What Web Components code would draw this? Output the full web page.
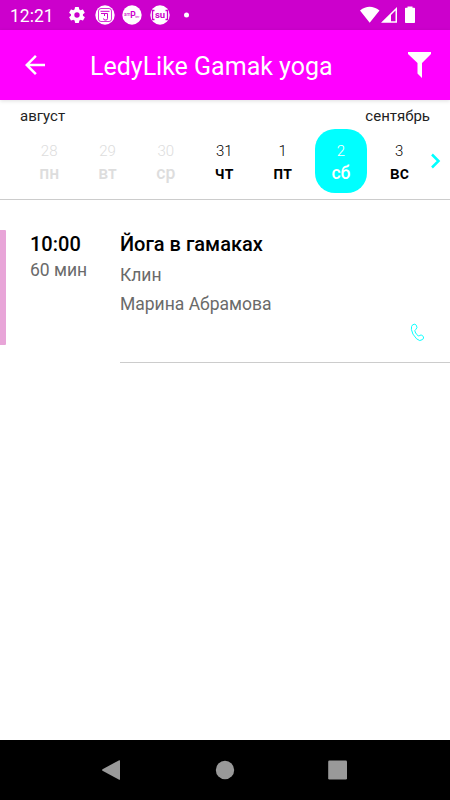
<!DOCTYPE html>
<html lang="ru">
<head>
<meta charset="utf-8">
<title>LedyLike Gamak yoga</title>
<style>
html,body{margin:0;height:100%}
body{font-family:Roboto,"Noto Sans",sans-serif;background:#fff;color:#000;overflow:hidden}
</style>
</head>
<body>
<schedule-app></schedule-app>
<script>
function define(name, html) {
  const t = document.createElement('template');
  t.innerHTML = html;
  customElements.define(name, class extends HTMLElement {
    constructor() {
      super();
      this.attachShadow({mode: 'open'}).append(t.content.cloneNode(true));
    }
  });
}

define('status-bar', `
<style>
:host{display:flex;align-items:center;height:30px;background:#c0c;color:#fff;box-sizing:border-box;padding:0 34px 0 10px}
.clock{font-size:17.5px;line-height:30px;width:57px;margin-top:1px}
svg{display:block;flex:none}
.ic{margin-right:7.500px}
.right{margin-left:auto;display:flex;align-items:center}
</style>
<span class="clock">12:21</span>
<svg class="ic" width="20" height="20" viewBox="0 0 24 24" fill="#fff"><path d="M19.1 12.9a7 7 0 0 0 0-1.8l2-1.6a.5.5 0 0 0 .1-.6l-1.900-3.300a.5.5 0 0 0-.6-.2l-2.400 1a7 7 0 0 0-1.600-1l-.4-2.500a.5.5 0 0 0-.5-.4h-3.800a.5.5 0 0 0-.5.4l-.4 2.500a7 7 0 0 0-1.600 1l-2.400-1a.5.5 0 0 0-.6.2L2.700 8.900a.5.5 0 0 0 .1.600l2 1.600a7 7 0 0 0 0 1.800l-2 1.600a.5.5 0 0 0-.1.600l1.900 3.300c.1.200.4.300.6.200l2.400-1a7 7 0 0 0 1.600 1l.4 2.500c0 .200.200.400.500.400h3.800c.300 0 .500-.200.500-.400l.400-2.500a7 7 0 0 0 1.600-1l2.400 1c.200.100.500 0 .600-.200l1.900-3.300a.5.5 0 0 0-.1-.600zM12 15.200a3.200 3.200 0 1 1 0-6.400 3.200 3.200 0 0 1 0 6.400z"/></svg>
<svg class="ic" width="20" height="20" viewBox="0 0 20 20"><circle cx="10" cy="10" r="9.700" fill="#fff"/><g fill="none" stroke="#c0c"><rect x="3.500" y="3.500" width="13" height="13" rx="2.500" stroke-width=".8"/><path d="M5.500 6.300h9M6 8.500h6.500v5q0 1.500-1.500 1.500h-1q-1.500 0-1.500-1.500M9.500 8.500v2.500" stroke-width="1"/></g></svg>
<svg class="ic" width="20" height="20" viewBox="0 0 20 20"><circle cx="10" cy="10" r="9.700" fill="#fff"/><g fill="#c0c" font-family="Roboto"><text x="2" y="11" font-size="4.500">am</text><text x="8.300" y="13" font-size="8.500" font-weight="700">P</text><text x="13.200" y="12.500" font-size="3.500">ter</text></g></svg>
<svg class="ic" width="20" height="20" viewBox="0 0 20 20"><circle cx="10" cy="10" r="9.700" fill="#fff"/><path d="M4.500 5.500H2.500v9h2M15.500 5.500h2v9h-2" fill="none" stroke="#c0c" stroke-width="1.300"/><text x="10" y="12.700" text-anchor="middle" font-family="Roboto" font-size="9.500" font-weight="700" fill="#c0c">su</text></svg>
<svg width="20" height="20" viewBox="0 0 20 20"><circle cx="9.500" cy="10" r="2.500" fill="#fff"/></svg>
<div class="right">
<svg width="56" height="20" viewBox="360 5 56 20" fill="#fff"><path d="M360 10.500Q369.500 3 379.500 10.500L369.700 22.700zM397 7v15.700h-16zM405 8.500q0-.8.800-.8h1.700V6.500h5v1.200h1.700q.8 0 .8.800v13.700q0 .8-.8.800h-8.400q-.8 0-.8-.8z"/><path d="M391 15l4.500-4.500v10.700H391z" fill="#c0c"/></svg>
</div>`);

define('app-bar', `
<style>
:host{display:flex;align-items:center;height:70px;background:#f0f;color:#fff;box-sizing:border-box;padding:0 18px 0 20px;position:relative;z-index:1;box-shadow:0 1px 4px rgba(0,0,0,.13)}
svg{display:block;flex:none}
h1{margin:4px 0 0 40px;font-size:25px;font-weight:400;line-height:30px;white-space:nowrap;flex:1}
</style>
<svg width="30" height="30" viewBox="0 0 24 24" fill="#fff"><path d="M20 11H7.830l5.590-5.590L12 4l-8 8 8 8 1.410-1.410L7.830 13H20v-2z"/></svg>
<h1><slot></slot></h1>
<svg width="24" height="28" viewBox="0 0 24 28" fill="#fff"><path d="M0 1H23v2L14 12v15L9.500 22.500V12L0 3z"/></svg>`);

define('day-cell', `
<style>
:host{display:flex;flex-direction:column;align-items:center;width:52px;height:64px;border-radius:20px;box-sizing:border-box;padding-top:12px}
:host([past]){color:#ddd}
:host([selected]){background:#0ff;color:#fff}
.n{font-size:15px;line-height:20px;font-weight:300}
.w{font-size:17.500px;line-height:24px;font-weight:500}
</style>
<span class="n"><slot name="num"></slot></span><span class="w"><slot></slot></span>`);

define('week-strip', `
<style>
:host{display:block;height:100px;box-sizing:border-box;border-bottom:1px solid #ccc}
.months{display:flex;justify-content:space-between;padding:6px 20px 0;font-size:15px;line-height:20px;height:23px;color:#222}
.row{display:flex;align-items:center;padding-left:20px}
.days{display:grid;grid-template-columns:repeat(7,58.350px);justify-items:center}
svg{display:block;margin-left:1.700px}
</style>
<div class="months"><span>август</span><span>сентябрь</span></div>
<div class="row"><div class="days">
<day-cell past><span slot="num">28</span>пн</day-cell>
<day-cell past><span slot="num">29</span>вт</day-cell>
<day-cell past><span slot="num">30</span>ср</day-cell>
<day-cell><span slot="num">31</span>чт</day-cell>
<day-cell><span slot="num">1</span>пт</day-cell>
<day-cell selected><span slot="num">2</span>сб</day-cell>
<day-cell><span slot="num">3</span>вс</day-cell>
</div><svg width="12" height="16" viewBox="0 0 12 16"><path d="M2 1.500L8.500 8L2 14.500" fill="none" stroke="#0ff" stroke-width="2.500"/></svg></div>`);

define('class-item', `
<style>
:host{display:grid;grid-template-columns:6px 24px 90px 1fr;height:133px;color:#6a6a6a;font-size:17.500px}
.bar{background:#e8a5d8;height:114.500px;border-radius:0 1px 1px 0}
.time{grid-column:3}
.big{font-size:20px;line-height:28px;font-weight:500;color:#000}
.info{border-bottom:1px solid #ccc;display:flex;flex-direction:column}
.line{line-height:29px}
.dur{line-height:24px}
.info .big{line-height:30px;margin:-1px 0 2px}
svg{display:block;margin:4px 25px 0 auto}
</style>
<div class="bar"></div>
<div class="time"><div class="big"><slot name="time"></slot></div><div class="dur"><slot name="duration"></slot></div></div>
<div class="info"><div class="big"><slot name="title"></slot></div><div class="line"><slot name="place"></slot></div><div class="line"><slot name="coach"></slot></div>
<svg width="15" height="20" viewBox="0 0 16 20" preserveAspectRatio="none" fill="none" stroke="#0ff" stroke-width="1"><path d="M2.800 1.800Q5.500.3 6.800 2.300Q8.300 5 6.300 6.300Q4.500 7.200 5.500 9Q7 12 8.800 12.800Q9.800 13.200 10.700 12.200Q12.500 11.500 14.200 13.500Q15 15 13.500 16.500Q10.500 19 7 15.800Q2 11 1.500 6.500Q1.200 3 2.800 1.800z"/></svg></div>`);

define('nav-bar', `
<style>
:host{display:flex;justify-content:center;align-items:center;height:60px;background:#000}
svg{display:block}
</style>
<svg width="246" height="22" viewBox="0 0 246 22" fill="#999"><path d="M.5 10.200L17.200 1.200Q18 1 18 1.800V20.200Q18 21 17.200 20.800L.5 11.800Q-.3 11 .5 10.200z"/><circle cx="123" cy="11" r="9.200"/><rect x="226.200" y="1.500" width="18.800" height="19" rx="1.200"/></svg>`);

define('schedule-app', `
<style>
:host{display:flex;flex-direction:column;width:450px;height:800px;background:#fff}
main{flex:1;padding-top:30px}
</style>
<status-bar></status-bar>
<app-bar>LedyLike Gamak yoga</app-bar>
<week-strip></week-strip>
<main><class-item><span slot="time">10:00</span><span slot="duration">60 мин</span><span slot="title">Йога в гамаках</span><span slot="place">Клин</span><span slot="coach">Марина Абрамова</span></class-item></main>
<nav-bar></nav-bar>`);
</script>
</body>
</html>
